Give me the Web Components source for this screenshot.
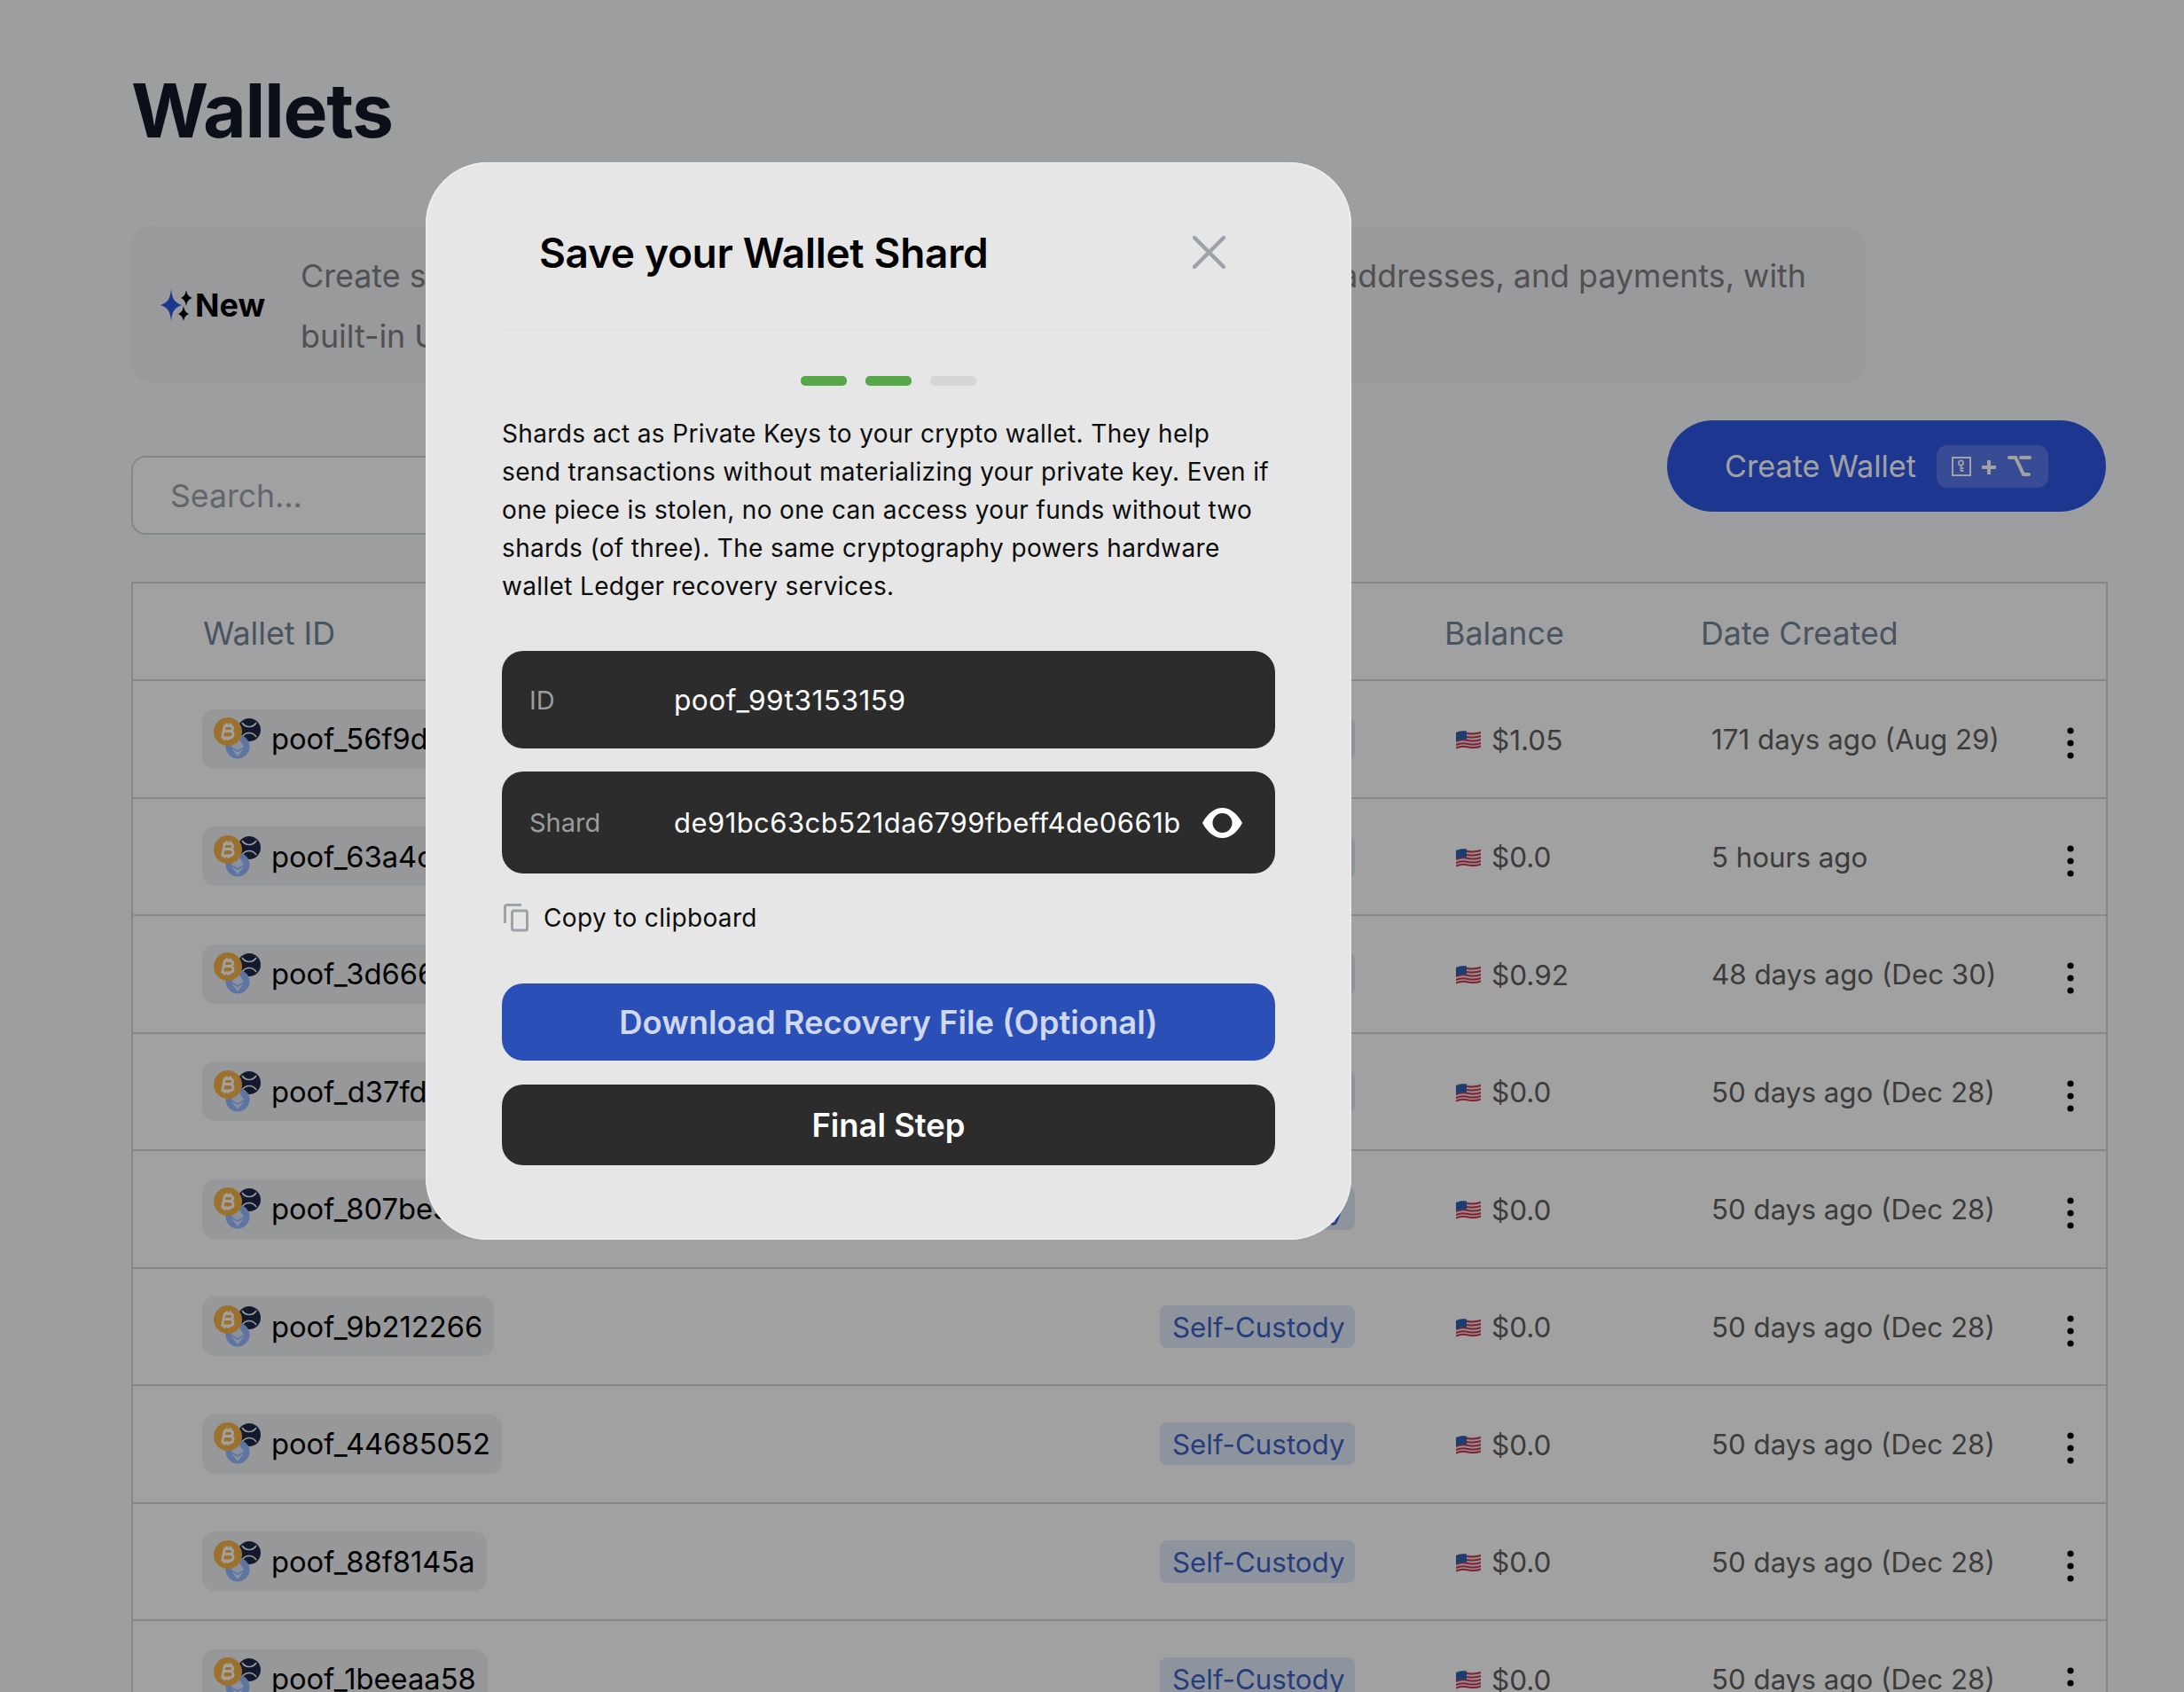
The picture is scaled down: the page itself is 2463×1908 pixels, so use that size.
<!DOCTYPE html>
<html>
<head>
<meta charset="utf-8">
<title>Wallets</title>
<style>
html, body { margin: 0; height: 1908px; overflow: hidden; background: #f9fafe; font-family: Inter, "Liberation Sans", sans-serif; }
</style>
</head>
<body>
<wallets-page>
  <new-banner>Create self-custodial crypto wallets to manage your balances, wallet <span style="margin-left: 6px">addresses, and payments, with</span><br>built-in USD on-ramps.</new-banner>
  <wallet-toolbar></wallet-toolbar>
  <wallet-table>
    <wallet-row id-text="poof_56f9d0a1" balance="$1.05" date="171 days ago (Aug 29)"></wallet-row>
    <wallet-row id-text="poof_63a4c7e2" balance="$0.0" date="5 hours ago"></wallet-row>
    <wallet-row id-text="poof_3d666b10" balance="$0.92" date="48 days ago (Dec 30)"></wallet-row>
    <wallet-row id-text="poof_d37fd4c8" balance="$0.0" date="50 days ago (Dec 28)"></wallet-row>
    <wallet-row id-text="poof_807be3f9" balance="$0.0" date="50 days ago (Dec 28)"></wallet-row>
    <wallet-row id-text="poof_9b212266" balance="$0.0" date="50 days ago (Dec 28)"></wallet-row>
    <wallet-row id-text="poof_44685052" balance="$0.0" date="50 days ago (Dec 28)"></wallet-row>
    <wallet-row id-text="poof_88f8145a" balance="$0.0" date="50 days ago (Dec 28)"></wallet-row>
    <wallet-row id-text="poof_1beeaa58" balance="$0.0" date="50 days ago (Dec 28)"></wallet-row>
  </wallet-table>
</wallets-page>
<shard-modal></shard-modal>

<script>
class WalletsPage extends HTMLElement {
    constructor() {
        super();
        this.attachShadow({ mode: 'open' }).innerHTML = `
        <style>
            :host { display: block; padding: 0 86px 0 148px; color: #111827; }
            h1 { margin: 0; padding-top: 75px; height: 255px; box-sizing: border-box; font-size: 84px; line-height: 100px; font-weight: 700; letter-spacing: -1.3px; }
        </style>
        <h1>Wallets</h1>
        <slot></slot>`;
    }
}

class NewBanner extends HTMLElement {
    constructor() {
        super();
        this.attachShadow({ mode: 'open' }).innerHTML = `
        <style>
            :host { display: flex; align-items: center; box-sizing: border-box; width: 1956px; height: 177px; background: #f3f4f6; border-radius: 24px; padding-left: 33px; }
            .tag { display: flex; align-items: center; gap: 3px; width: 158px; flex: none; font-size: 36px; font-weight: 700; color: #000; }
            p { margin: 2px 0 0; font-size: 35.8px; line-height: 68px; color: #7e8082; white-space: nowrap; }
        </style>
        <div class="tag">
            <svg width="36" height="36" viewBox="0 0 36 36">
                <path fill="#2f58e6" d="M12 0 C13 10 15 15 24 18 C15 21 13 26 12 36 C11 26 9 21 0 18 C9 15 11 10 12 0Z"/>
                <path fill="#000" d="M29 1 C30 6 31 8 36 10 C31 12 30 14 29 19 C28 14 27 12 23 10 C27 8 28 6 29 1Z"/>
                <path fill="#000" d="M26 19 C27 24 28 26 32 28 C28 30 27 32 26 36 C25 32 24 30 20 28 C24 26 25 24 26 19Z"/>
            </svg>
            <span>New</span>
        </div>
        <p><slot></slot></p>`;
    }
}

class WalletToolbar extends HTMLElement {
    constructor() {
        super();
        this.attachShadow({ mode: 'open' }).innerHTML = `
        <style>
            :host { display: flex; justify-content: space-between; align-items: flex-start; padding-top: 42px; margin-bottom: 53px; height: 129px; width: 2227px; }
            .search { margin-top: 40px; box-sizing: border-box; width: 640px; height: 89px; border: 2px solid #d1d5db; border-radius: 16px; padding: 2px 0 0 42px; display: flex; align-items: center; font-size: 35.6px; color: #9ca3af; background: #fff; }
            .create { box-sizing: border-box; width: 495px; height: 103px; background: #2f58e6; color: #fff; border-radius: 52px; display: flex; align-items: center; padding-left: 65px; gap: 23px; font-size: 34.2px; }
            .keys { width: 126px; height: 48px; border-radius: 12px; background: rgba(255,255,255,.2); display: flex; align-items: center; justify-content: center; }
        </style>
        <div class="search">Search...</div>
        <div class="create">
            <span>Create Wallet</span>
            <div class="keys">
                <svg width="92" height="26" viewBox="0 0 92 26" fill="none" stroke="#fff">
                    <rect x="1" y="3" width="20" height="20" stroke-width="2"/>
                    <circle cx="10.5" cy="9" r="2.6" stroke-width="1.8"/>
                    <path d="M10.5 11.5 V18.5 M10.5 15 H13.5 M10.5 18 H13.5" stroke-width="1.8"/>
                    <path d="M34 14 H50 M42 6 V22" stroke-width="4"/>
                    <path d="M65 3 H72 L81 22 H87 M78 3 H88" stroke-width="4" stroke-linecap="round"/>
                </svg>
            </div>
        </div>`;
    }
}

class WalletTable extends HTMLElement {
    constructor() {
        super();
        this.attachShadow({ mode: 'open' }).innerHTML = `
        <style>
            :host { display: block; width: 2229px; box-sizing: border-box; background: #fff; border: solid #d6d6d6; border-width: 2px 2px 0; }
            .head { display: grid; grid-template-columns: 1158px 321px 289px 1fr; align-items: center; box-sizing: border-box; height: 110px; padding-top: 4px; border-bottom: 2px solid #d6d6d6; font-size: 35.8px; color: #74869a; }
            .head span:first-child { padding-left: 79px; }
        </style>
        <div class="head"><span>Wallet ID</span><span>Type</span><span>Balance</span><span>Date Created</span></div>
        <slot></slot>`;
    }
}

class WalletRow extends HTMLElement {
    connectedCallback() {
        const shadow = this.attachShadow({ mode: 'open' });
        shadow.innerHTML = `
        <style>
            :host { display: grid; grid-template-columns: 1158px 321px 289px 1fr; align-items: center; height: 130.5px; border-bottom: 2px solid #d6d6d6; color: #606060; }
            .id { padding-left: 78px; }
            .chip { display: inline-flex; align-items: center; gap: 12px; height: 67px; padding: 0 13px 0 12px; background: #f0f1f4; border-radius: 14px; color: #000; font-size: 32.7px; vertical-align: middle; }
            .custody { display: inline-flex; align-items: center; box-sizing: border-box; width: 220px; height: 48px; padding: 2px 0 0 14px; border-radius: 8px; background: #e1ebfb; color: #3e5fc6; font-size: 31.3px; }
            .balance { display: flex; align-items: center; gap: 12px; padding: 2px 0 0 13px; font-size: 31.5px; }
            .date { position: relative; padding: 2px 0 0 12px; font-size: 31.3px; }
            .more { position: absolute; left: 413px; top: 50%; margin-top: -13px; display: block; }
        </style>
        <div class="id"><span class="chip">
            <svg width="54" height="50" viewBox="0 0 54 50">
                <circle cx="41" cy="15" r="13" fill="#212a4a"/>
                <path d="M33 7 C37 13 45 13 49 7 M33 23 C37 17 45 17 49 23" fill="none" stroke="#f9fafc" stroke-width="1.6"/>
                <circle cx="28" cy="34" r="13.5" fill="#97baff"/>
                <path d="M28 23 L35 34 L28 38 L21 34Z M21 36 L28 40 L35 36 L28 45Z" fill="#e4ecff" opacity=".85"/>
                <circle cx="17" cy="17" r="16" fill="#f7b44a"/>
                <path fill="none" stroke="#fff" stroke-width="2.8" d="M13.5 9.5 L10.5 24.5 M13 10.5 H19.5 C24 10.5 23.5 16.5 19 16.5 H12 M19 16.5 C25 16.5 24 24 18.5 24 H10.5 M16 7.5 L15.4 10 M20 7.7 L19.4 10 M13.8 24 L13.2 26.6 M17.8 24 L17.2 26.6"/>
            </svg>
            <span class="name"></span>
        </span></div>
        <div><span class="custody">Self-Custody</span></div>
        <div class="balance">
            <svg width="28" height="22" viewBox="0 0 28 22">
                <path fill="#e8e8ee" d="M0 3 C6 0 10 1 14 2 C19 3 23 3 28 1 V19 C23 21 19 21 14 20 C10 19 6 18 0 21Z"/>
                <path fill="none" stroke="#d0324a" stroke-width="2" d="M0 17 C6 14 10 15 14 16 C19 17 23 17 28 15 M0 13 C6 10 10 11 14 12 C19 13 23 13 28 11 M12 8 C19 9 23 9 28 7 M12 4 C19 5 23 5 28 3 M0 20.5 C6 17.5 10 18.500 14 19.500 C19 20.500 23 20.500 28 18.500"/>
                <path fill="#2e5fb0" d="M0 3 C5 1 8 1 12 1.600 V11 C8 10.500 5 10.500 0 12.500Z"/>
            </svg>
            <span class="amount"></span>
        </div>
        <div class="date">
            <span class="when"></span>
            <svg class="more" width="8" height="36" viewBox="0 0 8 36" fill="#000"><circle cx="4" cy="4" r="3.6"/><circle cx="4" cy="18" r="3.6"/><circle cx="4" cy="32" r="3.6"/></svg>
        </div>`;
        shadow.querySelector(".name").textContent = this.getAttribute("id-text");
        shadow.querySelector(".amount").textContent = this.getAttribute("balance");
        shadow.querySelector(".when").textContent = this.getAttribute("date");
    }
}

class ShardField extends HTMLElement {
    constructor() {
        super();
        this.attachShadow({ mode: 'open' }).innerHTML = `
        <style>
            :host { display: flex; align-items: center; background: #2c2c2c; border-radius: 24px; padding-left: 31px; color: #fff; font-size: 31px; }
            .label { width: 163px; flex: none; font-size: 29px; color: #9c9c9c; }
            .value { flex: 1; letter-spacing: .45px; }
        </style>
        <span class="label"></span><span class="value"><slot></slot></span><slot name="tail"></slot>`;
        this.shadowRoot.querySelector(".label").textContent = this.getAttribute("label");
    }
}

class ShardModal extends HTMLElement {
    constructor() {
        super();
        this.attachShadow({ mode: 'open' }).innerHTML = `
        <style>
            :host { position: absolute; inset: 0; display: block; background: rgba(0,0,0,.37); }
            .modal { position: absolute; left: 480px; top: 183px; width: 1044px; height: 1215px; box-sizing: border-box; padding: 0 86px; background: #e6e6e6; border-radius: 70px; box-shadow: inset 0 0 0 1.5px #eeeeee; color: #000; display: flex; flex-direction: column; }
            header { display: flex; align-items: center; justify-content: space-between; height: 190px; padding: 15px 56px 0 42px; border-bottom: 2px solid #e0e3e6; box-sizing: border-box; }
            h2 { margin: 0; font-size: 46px; font-weight: 600; letter-spacing: -.3px; }
            .steps { display: flex; justify-content: center; gap: 21px; margin-top: 51px; }
            .steps i { width: 52px; height: 11px; border-radius: 5px; background: #55a748; }
            .steps i:last-child { background: #d6d6d6; }
            p { margin: 33px 0 0; font-size: 28px; line-height: 43px; letter-spacing: .35px; color: #0c0c0c; white-space: nowrap; }
            shard-field.id { height: 110px; margin-top: 51px; font-size: 31.7px; }
            shard-field.shard { height: 115px; margin-top: 26px; padding-right: 37px; }
            .copy { display: flex; align-items: center; gap: 17px; margin-top: 33px; height: 33px; font-size: 28px; letter-spacing: .35px; color: #0c0c0c; padding-left: 2px; }
            .btn { display: flex; align-items: center; justify-content: center; border-radius: 24px; font-size: 36.4px; font-weight: 600; color: #cfd8ee; }
            .blue { height: 87px; margin-top: 58px; background: #2a50b8; }
            .dark { height: 91px; margin-top: 27px; background: #2c2c2c; color: #fff; }
        </style>
        <div class="modal">
            <header>
                <h2>Save your Wallet Shard</h2>
                <svg width="37" height="37" viewBox="0 0 37 37" stroke="#9ca3a8" stroke-width="4.500" stroke-linecap="round"><path d="M2 2 L35 35 M35 2 L2 35"/></svg>
            </header>
            <div class="steps"><i></i><i></i><i></i></div>
            <p>Shards act as Private Keys to your crypto wallet. They help<br>send transactions without materializing your private key. Even if<br>one piece is stolen, no one can access your funds without two<br>shards (of three). The same cryptography powers hardware<br>wallet Ledger recovery services.</p>
            <shard-field class="id" label="ID">poof_99t3153159</shard-field>
            <shard-field class="shard" label="Shard">de91bc63cb521da6799fbeff4de0661b
                <svg slot="tail" width="45" height="34" viewBox="0 0 45 34"><path fill-rule="evenodd" fill="#fff" d="M0 17 C6 6 14 0 22.500 0 C31 0 39 6 45 17 C39 28 31 34 22.500 34 C14 34 6 28 0 17Z M22.500 6 A11 11 0 1 0 22.500 28 A11 11 0 1 0 22.500 6Z"/></svg>
            </shard-field>
            <div class="copy">
                <svg width="28" height="32" viewBox="0 0 28 32" fill="none" stroke="#9ca3a8" stroke-width="3"><rect x="9.500" y="8" width="17" height="22" rx="2"/><path d="M1.500 22 V3.500 A2 2 0 0 1 3.500 1.500 H20"/></svg>
                <span>Copy to clipboard</span>
            </div>
            <div class="btn blue">Download Recovery File (Optional)</div>
            <div class="btn dark">Final Step</div>
        </div>`;
    }
}

customElements.define("wallets-page", WalletsPage);
customElements.define("new-banner", NewBanner);
customElements.define("wallet-toolbar", WalletToolbar);
customElements.define("wallet-table", WalletTable);
customElements.define("wallet-row", WalletRow);
customElements.define("shard-field", ShardField);
customElements.define("shard-modal", ShardModal);
</script>
</body>
</html>
